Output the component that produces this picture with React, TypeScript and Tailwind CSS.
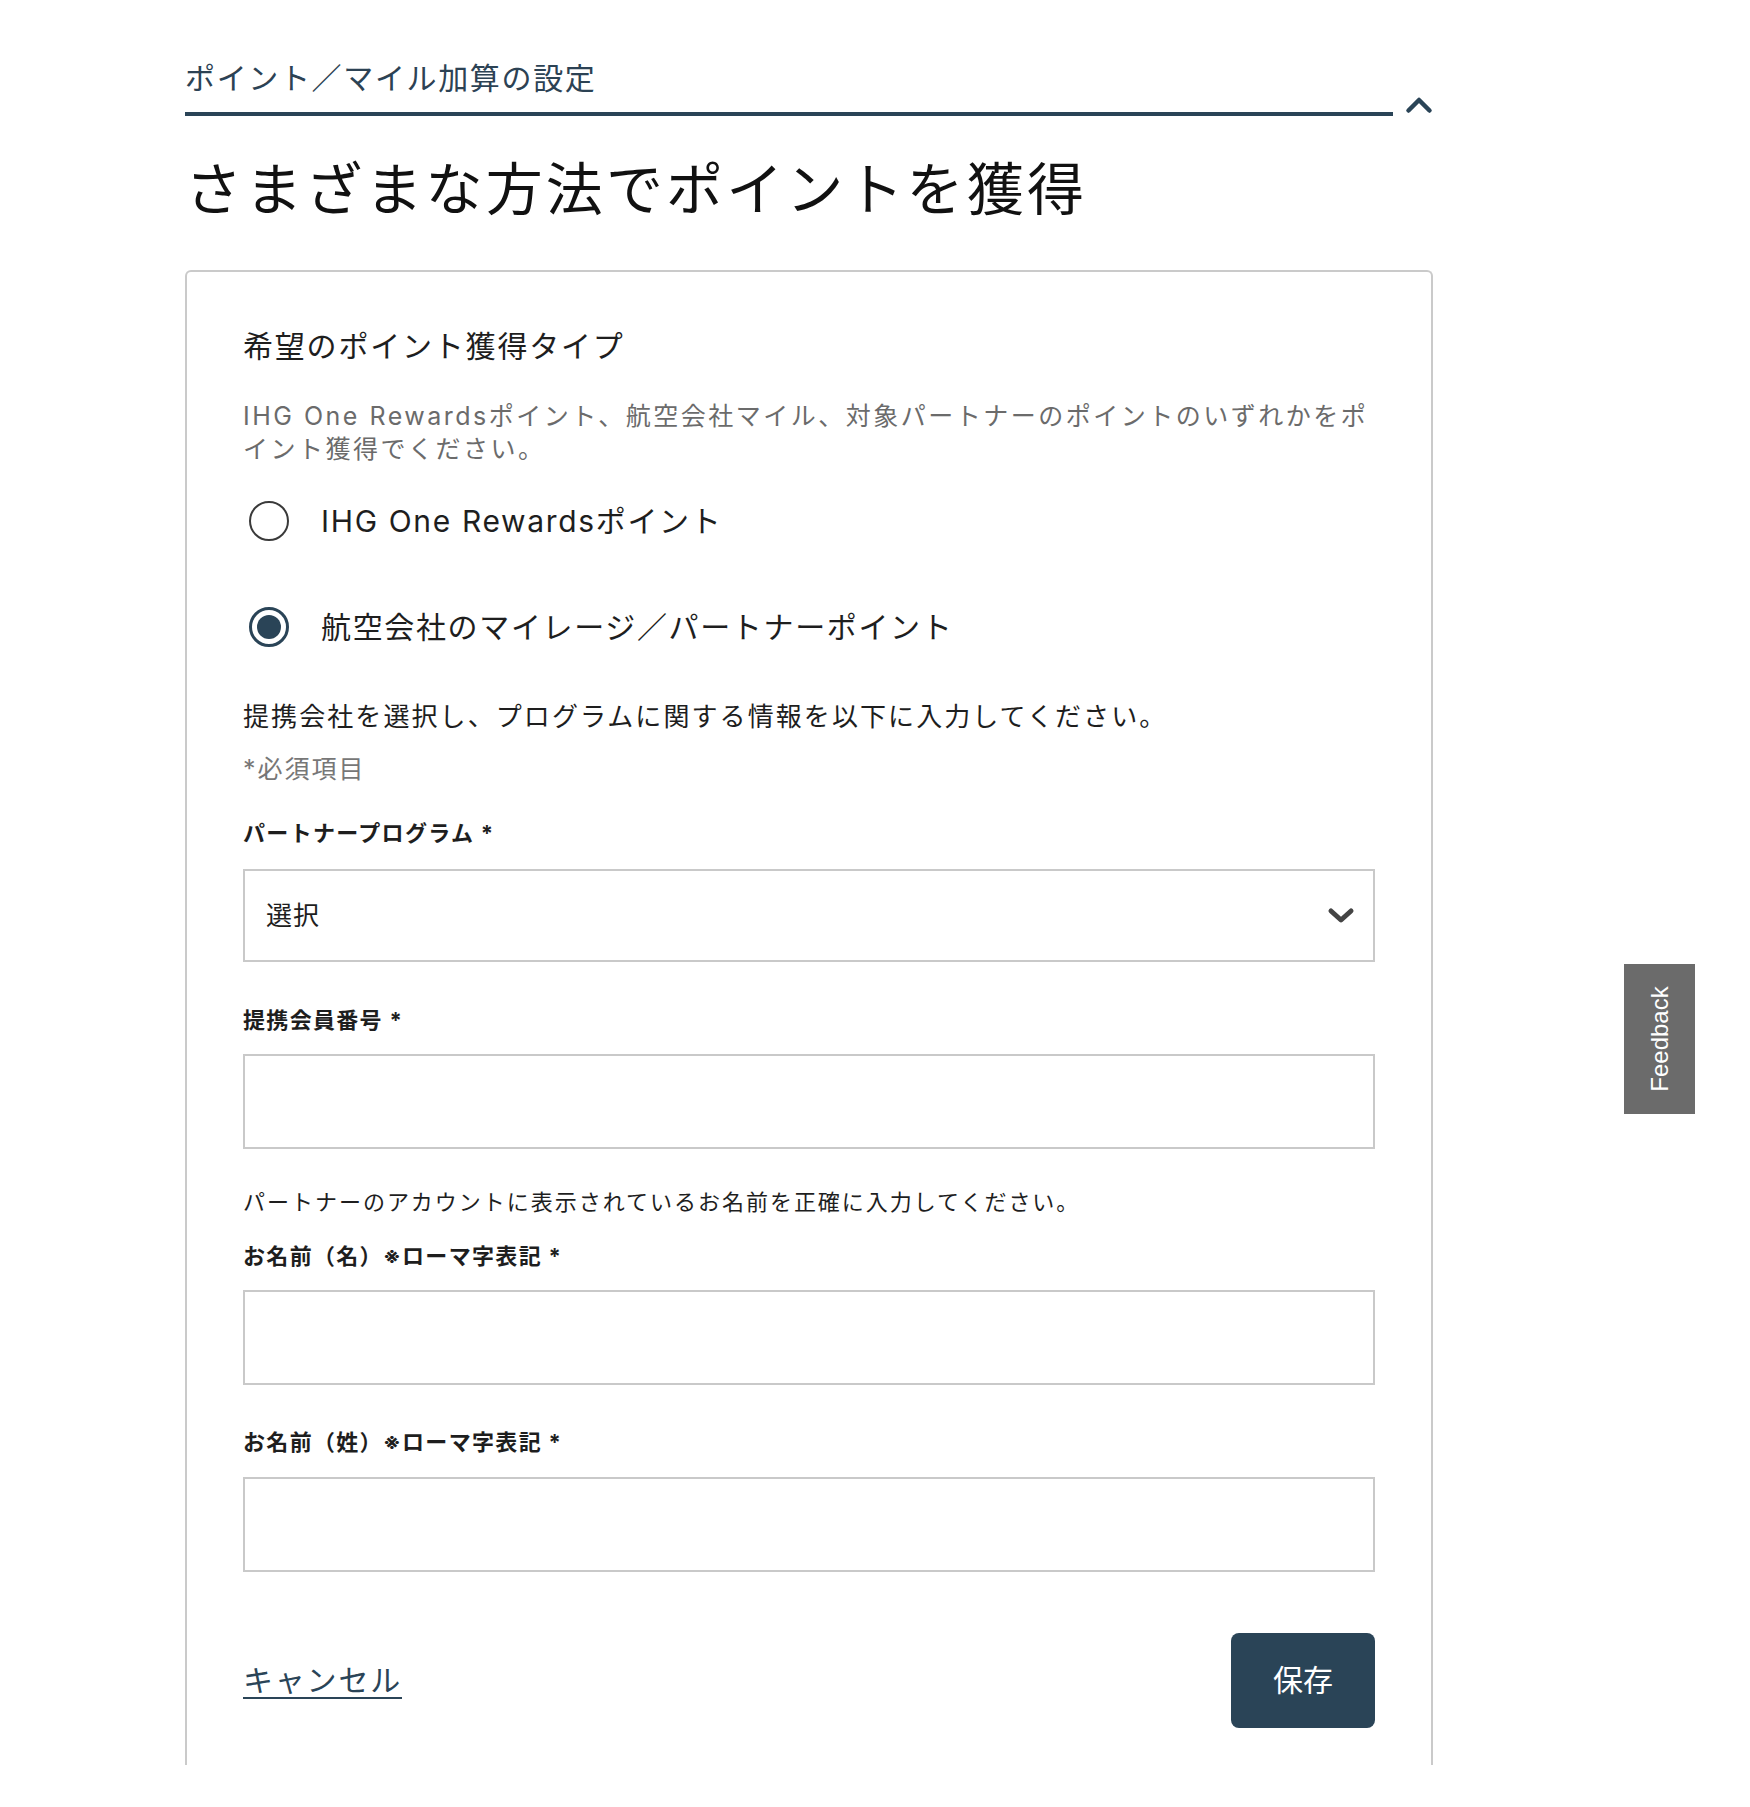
import { useState } from 'react';

const font = "font-['Inter','Noto_Sans_CJK_JP',sans-serif]";

function Radio({ checked, label, onClick }: { checked: boolean; label: string; onClick: () => void }) {
  return (
    <button type="button" onClick={onClick} className="flex items-center gap-8 pl-[6px] text-left">
      {checked ? (
        <span className="flex h-10 w-10 items-center justify-center rounded-full border-[3px] border-[#2a4457]">
          <span className="h-6 w-6 rounded-full bg-[#2a4457]" />
        </span>
      ) : (
        <span className="h-10 w-10 rounded-full border-2 border-[#3a3a3a]" />
      )}
      <span className="text-[30px] leading-10 tracking-[0.055em] text-[#1e1e1e]">{label}</span>
    </button>
  );
}

function FieldLabel({ children }: { children: string }) {
  return <p className="text-[22px] font-bold leading-[30px] tracking-[0.06em] text-[#1e1e1e]">{children}</p>;
}

function TextBox() {
  return <input type="text" className="block h-[95px] w-full border-2 border-[#c9c9c9] bg-white px-5 text-[26px] outline-none" />;
}

export default function App() {
  const [mode, setMode] = useState<'ihg' | 'partner'>('partner');

  return (
    <div className={`relative min-h-[1807px] bg-white ${font}`}>
      <div className="ml-[185px] w-[1248px] pt-[58px]">
        {/* collapsible section header */}
        <div className="flex items-end gap-3">
          <div className="flex-1 border-b-4 border-[#2a4457] pb-[14px]">
            <h2 className="text-[30px] leading-10 tracking-[0.055em] text-[#2c4254]">ポイント／マイル加算の設定</h2>
          </div>
          <svg width="28" height="18" viewBox="0 0 28 18" className="mb-[2px]">
            <path d="M3.5 14.5 L14 4 L24.5 14.5" fill="none" stroke="#2a4457" strokeWidth="4.5" strokeLinecap="round" strokeLinejoin="round" />
          </svg>
        </div>

        <h1 className="mt-10 text-[57px] leading-[68px] tracking-[0.055em] text-[#111]">さまざまな方法でポイントを獲得</h1>

        <div className="mt-[46px] rounded-t-md border-2 border-b-0 border-[#cacaca] px-[56px] pb-[37px] pt-[54px]">
          <h3 className="text-[30px] leading-10 tracking-[0.06em] text-[#1e1e1e]">希望のポイント獲得タイプ</h3>
          <p className="mt-[34px] text-[25px] leading-[33px] tracking-[0.1em] text-[#6b6b6b]">
            IHG One Rewardsポイント、航空会社マイル、対象パートナーのポイントのいずれかをポ
            <br />
            イント獲得でください。
          </p>

          <div className="mt-[35px] flex flex-col gap-[66px]">
            <Radio checked={mode === 'ihg'} label="IHG One Rewardsポイント" onClick={() => setMode('ihg')} />
            <Radio checked={mode === 'partner'} label="航空会社のマイレージ／パートナーポイント" onClick={() => setMode('partner')} />
          </div>

          <p className="mt-[52px] text-[26px] leading-9 tracking-[0.08em] text-[#1e1e1e]">
            提携会社を選択し、プログラムに関する情報を以下に入力してください。
          </p>
          <p className="mt-[17px] text-[25px] leading-[34px] tracking-[0.08em] text-[#777]">*必須項目</p>

          <div className="mt-8">
            <FieldLabel>パートナープログラム *</FieldLabel>
            <div className="mt-[21px] flex h-[93px] items-center justify-between border-2 border-[#c9c9c9] pl-[21px] pr-[18px]">
              <span className="text-[26px] tracking-[0.04em] text-[#1e1e1e]">選択</span>
              <svg width="28" height="17" viewBox="0 0 28 17">
                <path d="M4 4 L14 13 L24 4" fill="none" stroke="#444" strokeWidth="5" strokeLinecap="round" strokeLinejoin="round" />
              </svg>
            </div>
          </div>

          <div className="mt-[43px]">
            <FieldLabel>提携会員番号 *</FieldLabel>
            <div className="mt-[19px]">
              <TextBox />
            </div>
          </div>

          <p className="mt-[38px] text-[22px] leading-[30px] tracking-[0.09em] text-[#1e1e1e]">
            パートナーのアカウントに表示されているお名前を正確に入力してください。
          </p>

          <div className="mt-6">
            <FieldLabel>お名前（名）※ローマ字表記 *</FieldLabel>
            <div className="mt-[19px]">
              <TextBox />
            </div>
          </div>

          <div className="mt-[42px]">
            <FieldLabel>お名前（姓）※ローマ字表記 *</FieldLabel>
            <div className="mt-5">
              <TextBox />
            </div>
          </div>

          <div className="mt-[61px] flex items-center justify-between">
            <a href="#" className="text-[30px] tracking-[0.06em] text-[#2a4457] underline decoration-2 underline-offset-[6px]">
              キャンセル
            </a>
            <button type="button" className="h-[95px] w-[144px] rounded-lg bg-[#2a4457] text-[30px] text-white">
              保存
            </button>
          </div>
        </div>
      </div>

      {/* floating feedback tab */}
      <div className="absolute left-[1624px] top-[964px] flex h-[150px] w-[71px] items-center justify-center bg-[#6b6b6b]">
        <span className="-rotate-90 whitespace-nowrap font-['Liberation_Sans',Arial,sans-serif] text-[24px] text-white">Feedback</span>
      </div>
    </div>
  );
}
